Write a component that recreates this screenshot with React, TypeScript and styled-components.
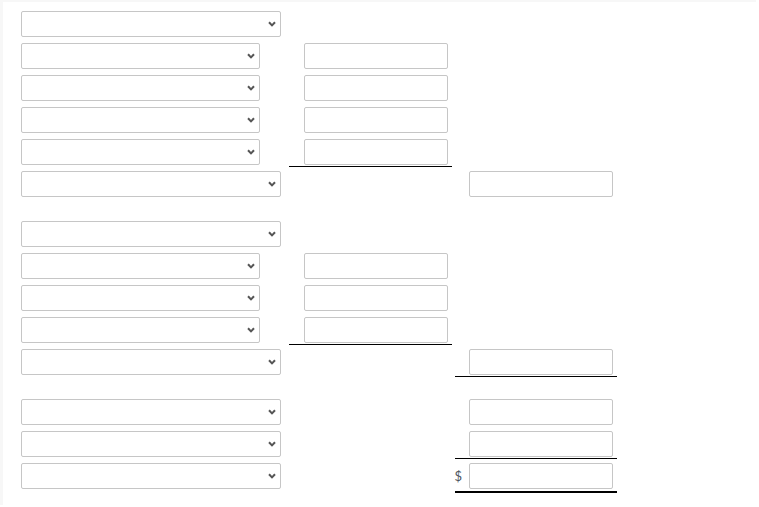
import React from "react";
import styled, { createGlobalStyle } from "styled-components";

const Global = createGlobalStyle`
  html, body { margin: 0; padding: 0; background: #ffffff; }
  body { font-family: Lato, "Liberation Sans", sans-serif; }
`;

const Page = styled.div`
  width: 756px;
  min-height: 505px;
  border-left: 3px solid #f7f7f7;
  border-top: 2px solid #f7f7f7;
  padding: 9px 0 0 18px;
  box-sizing: border-box;
  display: flex;
  flex-direction: column;
`;

const Row = styled.div`
  display: flex;
  align-items: flex-start;
  height: 32px;
`;

const Spacer = styled.div`
  height: 18px;
`;

const LeftCell = styled.div`
  width: 268px;
  flex: none;
`;

const SelectWrap = styled.div<{ $w: number }>`
  position: relative;
  width: ${(p) => p.$w}px;
  height: 26px;
`;

const Select = styled.select`
  appearance: none;
  -webkit-appearance: none;
  width: 100%;
  height: 26px;
  box-sizing: border-box;
  border: 1px solid #c6c6c6;
  border-radius: 2px;
  background: #ffffff;
  margin: 0;
  padding: 0 20px 0 6px;
  font-family: Lato, "Liberation Sans", sans-serif;
  font-size: 13px;
  outline: none;
`;

const Chevron = styled.svg`
  position: absolute;
  right: 5px;
  top: 10px;
  width: 8px;
  height: 6px;
  pointer-events: none;
`;

const NumCell = styled.div<{ $line?: "none" | "single" | "double"; $mid?: boolean }>`
  flex: none;
  box-sizing: border-box;
  width: ${(p) => (p.$mid ? 163 : 162)}px;
  margin-left: ${(p) => (p.$mid ? 0 : 3)}px;
  padding-right: 4px;
  padding-bottom: ${(p) => (p.$line === "double" ? 2 : 1)}px;
  display: flex;
  align-items: center;
  justify-content: flex-end;
  border-bottom: ${(p) =>
    p.$line === "double" ? "2px solid #000" : p.$line === "single" ? "1px solid #000" : "1px solid transparent"};
`;

const Input = styled.input`
  width: 144px;
  height: 26px;
  box-sizing: border-box;
  border: 1px solid #c6c6c6;
  border-radius: 2px;
  margin: 0;
  padding: 0 6px;
  background: #ffffff;
  font-family: Lato, "Liberation Sans", sans-serif;
  font-size: 13px;
  outline: none;
`;

const Dollar = styled.span`
  font-family: Lato, "Liberation Sans", sans-serif;
  font-size: 13px;
  color: #4d5560;
  margin-right: 7px;
`;

const Empty = styled.div<{ $mid?: boolean }>`
  flex: none;
  width: ${(p) => (p.$mid ? 163 : 162)}px;
  margin-left: ${(p) => (p.$mid ? 0 : 3)}px;
`;

function Drop({ w }: { w: number }) {
  return (
    <SelectWrap $w={w}>
      <Select defaultValue="">
        <option value=""></option>
      </Select>
      <Chevron viewBox="0 0 8 6">
        <path d="M1 1.2 L4 4.4 L7 1.2" fill="none" stroke="#555" strokeWidth="2" />
      </Chevron>
    </SelectWrap>
  );
}

type Line = "none" | "single" | "double";
type RowSpec = {
  w: number;
  mid?: Line;
  right?: Line;
  dollar?: boolean;
};

const groups: RowSpec[][] = [
  [
    { w: 260 },
    { w: 239, mid: "none" },
    { w: 239, mid: "none" },
    { w: 239, mid: "none" },
    { w: 239, mid: "single" },
    { w: 260, right: "none" },
  ],
  [
    { w: 260 },
    { w: 239, mid: "none" },
    { w: 239, mid: "none" },
    { w: 239, mid: "single" },
    { w: 260, right: "single" },
  ],
  [
    { w: 260, right: "none" },
    { w: 260, right: "single" },
    { w: 260, right: "double", dollar: true },
  ],
];

export default function App() {
  return (
    <>
      <Global />
      <Page>
        {groups.map((g, gi) => (
          <React.Fragment key={gi}>
            {gi > 0 && <Spacer />}
            {g.map((r, ri) => (
              <Row key={ri}>
                <LeftCell>
                  <Drop w={r.w} />
                </LeftCell>
                {r.mid ? (
                  <NumCell $mid $line={r.mid}>
                    <Input type="text" />
                  </NumCell>
                ) : (
                  <Empty $mid />
                )}
                {r.right ? (
                  <NumCell $line={r.right}>
                    {r.dollar && <Dollar>$</Dollar>}
                    <Input type="text" />
                  </NumCell>
                ) : (
                  <Empty />
                )}
              </Row>
            ))}
          </React.Fragment>
        ))}
      </Page>
    </>
  );
}
